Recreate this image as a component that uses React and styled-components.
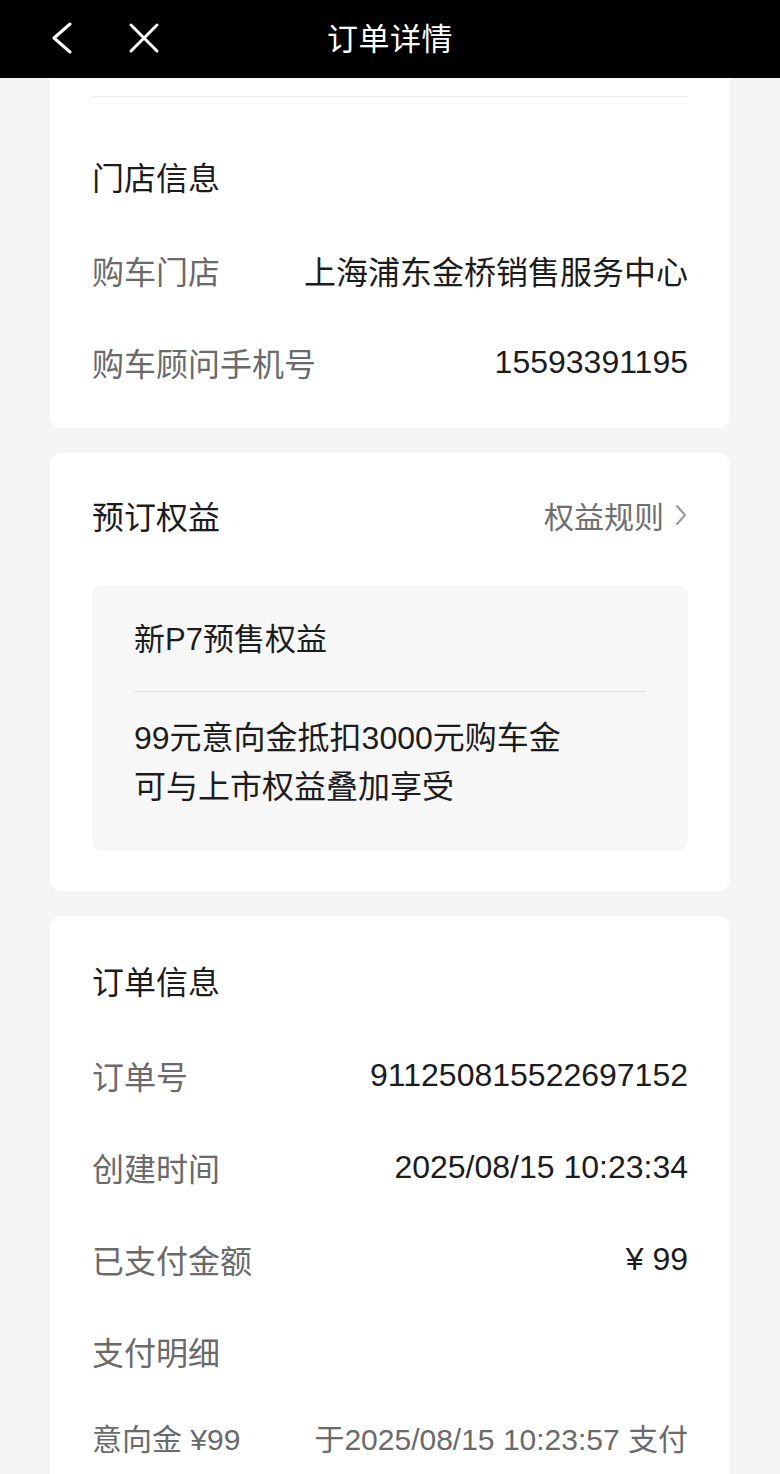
import React from "react";
import styled, { createGlobalStyle } from "styled-components";

const GlobalStyle = createGlobalStyle`
  html, body {
    margin: 0;
    padding: 0;
    background: #f5f5f5;
  }
  body {
    font-family: "Liberation Sans", "Noto Sans CJK SC", sans-serif;
    -webkit-font-smoothing: antialiased;
  }
`;

const Page = styled.div`
  width: 780px;
  min-height: 1474px;
  background: #f5f5f5;
  overflow: hidden;
`;

const NavBar = styled.div`
  height: 78px;
  background: #000;
  display: grid;
  grid-template-columns: 1fr auto 1fr;
  align-items: center;
`;

const NavLeft = styled.div`
  display: flex;
  align-items: center;
  gap: 54px;
  padding-left: 50px;
  padding-bottom: 2px;
`;

const NavTitle = styled.div`
  color: #fff;
  font-size: 31px;
  letter-spacing: 0.5px;
  padding-bottom: 6px;
`;

const Content = styled.div`
  display: flex;
  flex-direction: column;
  gap: 25px;
  padding: 0 50px;
`;

const Card = styled.div`
  background: #fff;
  border-radius: ${(p) => (p.$flushTop ? "0 0 12px 12px" : "12px")};
  padding: ${(p) => p.$pad || "42px 42px 18px"};
`;

const TopRule = styled.div`
  height: 1px;
  background: #ececec;
  margin-bottom: 57px;
`;

const CardHead = styled.div`
  display: flex;
  justify-content: space-between;
  align-items: center;
  height: 44px;
  margin-bottom: ${(p) => p.$gap || "28px"};
`;

const CardTitle = styled.div`
  font-size: 32px;
  color: #1c1c1c;
`;

const HeadLink = styled.div`
  display: flex;
  align-items: center;
  gap: 10px;
  font-size: 30px;
  color: #6f6f6f;
`;

const Row = styled.div`
  display: flex;
  justify-content: space-between;
  align-items: center;
  height: ${(p) => p.$h || 92}px;
  font-size: ${(p) => p.$size || 32}px;
`;

const Label = styled.span`
  color: #6a6a6a;
`;

const Value = styled.span`
  color: ${(p) => (p.$muted ? "#6a6a6a" : "#1c1c1c")};
`;

const PerkBox = styled.div`
  background: #f7f7f7;
  border-radius: 10px;
  padding: 33px 42px 39px;
`;

const PerkName = styled.div`
  font-size: 31px;
  line-height: 44px;
  color: #1c1c1c;
`;

const PerkRule = styled.div`
  height: 1px;
  background: #e3e3e3;
  margin: 29px 0 22px;
`;

const PerkText = styled.div`
  font-size: 32px;
  line-height: 49px;
  color: #1c1c1c;
`;

const BackIcon = () => (
  <svg width="24" height="32" viewBox="0 0 24 32" fill="none">
    <polyline points="20,2 4,16 20,30" stroke="#fff" strokeWidth="3" strokeLinecap="round" strokeLinejoin="round" />
  </svg>
);

const CloseIcon = () => (
  <svg width="32" height="32" viewBox="0 0 32 32" fill="none">
    <path d="M3 3 L29 29 M29 3 L3 29" stroke="#fff" strokeWidth="3" strokeLinecap="round" />
  </svg>
);

const ChevronRight = () => (
  <svg width="14" height="24" viewBox="0 0 14 24" fill="none">
    <polyline points="3,3 11,12 3,21" stroke="#9a9a9a" strokeWidth="2.2" strokeLinecap="round" strokeLinejoin="round" />
  </svg>
);

const orderRows = [
  { label: "订单号", value: "911250815522697152" },
  { label: "创建时间", value: "2025/08/15 10:23:34" },
  { label: "已支付金额", value: "¥ 99" },
];

export default function App() {
  return (
    <Page>
      <GlobalStyle />
      <NavBar>
        <NavLeft>
          <BackIcon />
          <CloseIcon />
        </NavLeft>
        <NavTitle>订单详情</NavTitle>
        <div />
      </NavBar>

      <Content>
        <Card $flushTop $pad="18px 42px 20px">
          <TopRule />
          <CardHead $gap="26px">
            <CardTitle>门店信息</CardTitle>
          </CardHead>
          <Row>
            <Label>购车门店</Label>
            <Value>上海浦东金桥销售服务中心</Value>
          </Row>
          <Row>
            <Label>购车顾问手机号</Label>
            <Value>15593391195</Value>
          </Row>
        </Card>

        <Card $pad="40px 42px 40px">
          <CardHead $gap="48px">
            <CardTitle>预订权益</CardTitle>
            <HeadLink>
              权益规则
              <ChevronRight />
            </HeadLink>
          </CardHead>
          <PerkBox>
            <PerkName>新P7预售权益</PerkName>
            <PerkRule />
            <PerkText>99元意向金抵扣3000元购车金</PerkText>
            <PerkText>可与上市权益叠加享受</PerkText>
          </PerkBox>
        </Card>

        <Card $pad="42px 42px 40px">
          <CardHead $gap="27px">
            <CardTitle>订单信息</CardTitle>
          </CardHead>
          {orderRows.map((r) => (
            <Row key={r.label}>
              <Label>{r.label}</Label>
              <Value>{r.value}</Value>
            </Row>
          ))}
          <Row>
            <Label>支付明细</Label>
          </Row>
          <Row $h={80} $size={30}>
            <Label>意向金 ¥99</Label>
            <Value $muted>于2025/08/15 10:23:57 支付</Value>
          </Row>
        </Card>
      </Content>
    </Page>
  );
}
